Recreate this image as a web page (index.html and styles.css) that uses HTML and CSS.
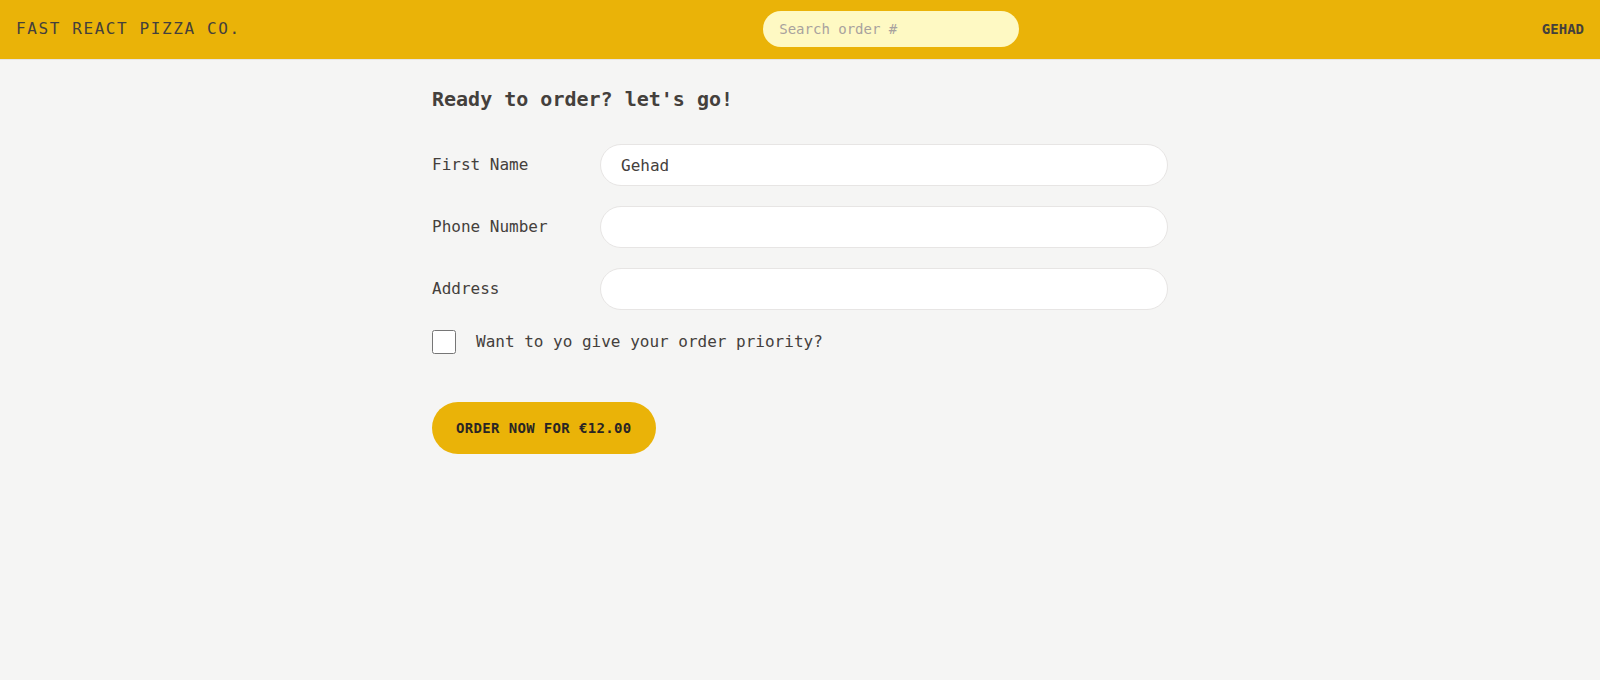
FILE: index.html
```html
<!DOCTYPE html>
<html lang="en">
<head>
<meta charset="utf-8">
<title>Fast React Pizza Co.</title>
<link rel="stylesheet" href="styles.css">
</head>
<body>
<div class="app">
  <header class="header">
    <a class="logo" href="#">Fast React Pizza Co.</a>
    <form class="search"><input class="search-input" type="text" placeholder="Search order #"></form>
    <div class="username">Gehad</div>
  </header>
  <main class="main">
    <h2 class="title">Ready to order? let's go!</h2>
    <form class="order-form">
      <div class="row">
        <label class="label">First Name</label>
        <input class="input" type="text" value="Gehad">
      </div>
      <div class="row">
        <label class="label">Phone Number</label>
        <input class="input" type="tel">
      </div>
      <div class="row">
        <label class="label">Address</label>
        <input class="input" type="text">
      </div>
      <div class="check-row">
        <input class="checkbox" type="checkbox" id="priority">
        <label class="check-label" for="priority">Want to yo give your order priority?</label>
      </div>
      <div>
        <button class="btn" type="button">Order now for €12.00</button>
      </div>
    </form>
  </main>
</div>
</body>
</html>
```

FILE: styles.css
```css
* { box-sizing: border-box; }
html, body { margin: 0; padding: 0; }
body {
  background: #f5f5f4;
  color: #44403c;
  font-family: "DejaVu Sans Mono", "Liberation Mono", monospace;
  font-size: 16px;
  line-height: 1.5;
}
.header {
  display: flex;
  align-items: center;
  justify-content: space-between;
  background: #eab308;
  border-bottom: 1px solid #e7e5e4;
  padding: 11px 16px 12px;
  text-transform: uppercase;
}
.logo {
  color: #44403c;
  text-decoration: none;
  letter-spacing: 0.1em;
  font-size: 16px;
  line-height: 24px;
}
.search { margin: 0; }
.search-input {
  width: 256px;
  height: 36px;
  border: 0;
  border-radius: 9999px;
  background: #fef9c3;
  padding: 8px 16px;
  font-family: inherit;
  font-size: 14px;
  line-height: 20px;
  color: #44403c;
  outline: none;
}
.search-input::placeholder { color: #a8a29e; }
.username {
  font-size: 14px;
  line-height: 20px;
  font-weight: 600;
  color: #44403c;
}
.main {
  max-width: 768px;
  margin: 0 auto;
  padding: 25px 16px 24px;
}
.title {
  margin: 0 0 31px;
  font-size: 20px;
  line-height: 28px;
  font-weight: 600;
}
.order-form { margin: 0; }
.row {
  display: flex;
  align-items: center;
  gap: 8px;
  margin-bottom: 20px;
}
.label {
  flex: 0 0 160px;
  font-size: 16px;
}
.input {
  flex-grow: 1;
  height: 42px;
  border: 1px solid #e7e5e4;
  border-radius: 9999px;
  background: #fff;
  padding: 8px 20px;
  font-family: inherit;
  font-size: 16px;
  line-height: 24px;
  color: #44403c;
  outline: none;
}
.check-row {
  display: flex;
  align-items: center;
  gap: 20px;
  margin-bottom: 48px;
}
.checkbox {
  width: 24px;
  height: 24px;
  margin: 0;
  accent-color: #facc15;
}
.check-label { font-weight: 500; font-size: 16px; }
.btn {
  display: inline-block;
  border: 0;
  border-radius: 9999px;
  background: #eab308;
  color: #292524;
  font-family: inherit;
  font-size: 14px;
  line-height: 20px;
  font-weight: 600;
  letter-spacing: 0.025em;
  text-transform: uppercase;
  padding: 16px 24px;
  cursor: pointer;
}
```
